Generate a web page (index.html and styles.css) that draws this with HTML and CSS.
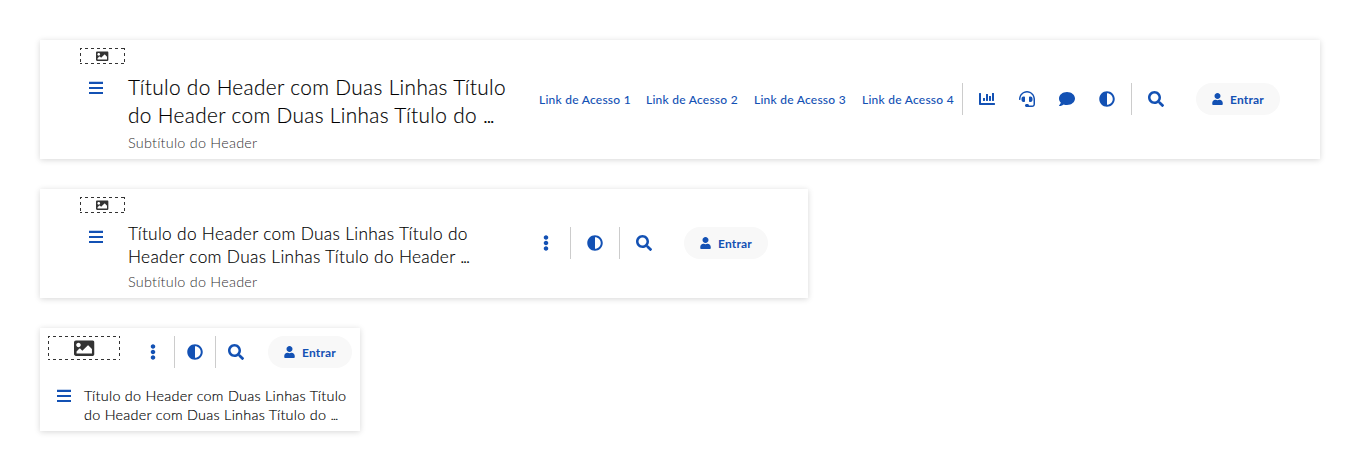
FILE: index.html
```html
<!DOCTYPE html>
<html lang="pt-BR">
<head>
<meta charset="utf-8">
<title>Header</title>
<link rel="stylesheet" href="styles.css">
</head>
<body>
<svg class="sprite" aria-hidden="true">
  <symbol id="bars" viewBox="0 0 14 14"><path d="M0 1.7h14v2.2H0zM0 7h14v2H0zM0 12h14v2H0z"/></symbol>
  <symbol id="image" viewBox="0 0 512 512"><path d="M464 448H48c-26.51 0-48-21.49-48-48V112c0-26.51 21.49-48 48-48h416c26.51 0 48 21.49 48 48v288c0 26.51-21.49 48-48 48zM112 120c-30.928 0-56 25.072-56 56s25.072 56 56 56 56-25.072 56-56-25.072-56-56-56zM64 384h384V272l-87.515-87.515c-4.686-4.686-12.284-4.686-16.971 0L208 320l-55.515-55.515c-4.686-4.686-12.284-4.686-16.971 0L64 336v48z"/></symbol>
  <symbol id="chart" viewBox="0 0 512 512"><path d="M332.8 320h38.4c6.4 0 12.8-6.4 12.8-12.8V172.8c0-6.4-6.4-12.8-12.8-12.8h-38.4c-6.4 0-12.8 6.4-12.8 12.8v134.4c0 6.4 6.4 12.8 12.8 12.8zm96 0h38.4c6.4 0 12.8-6.4 12.8-12.8V76.8c0-6.4-6.4-12.8-12.8-12.8h-38.4c-6.4 0-12.8 6.4-12.8 12.8v230.4c0 6.4 6.4 12.8 12.8 12.8zm-288 0h38.4c6.4 0 12.8-6.4 12.8-12.8v-70.4c0-6.4-6.4-12.8-12.8-12.8h-38.4c-6.4 0-12.8 6.4-12.8 12.8v70.4c0 6.4 6.4 12.8 12.8 12.8zm96 0h38.4c6.4 0 12.8-6.4 12.8-12.8V108.8c0-6.4-6.4-12.8-12.8-12.8h-38.4c-6.4 0-12.8 6.4-12.8 12.8v198.4c0 6.4 6.4 12.8 12.8 12.8zM496 384H64V80c0-8.84-7.16-16-16-16H16C7.16 64 0 71.16 0 80v336c0 17.67 14.33 32 32 32h464c8.84 0 16-7.16 16-16v-32c0-8.84-7.16-16-16-16z"/></symbol>
  <symbol id="headset" viewBox="0 0 512 512"><path d="M192 208c0-17.67-14.33-32-32-32h-16c-35.35 0-64 28.65-64 64v48c0 35.35 28.65 64 64 64h16c17.67 0 32-14.33 32-32V208zm176 144c35.35 0 64-28.65 64-64v-48c0-35.35-28.65-64-64-64h-16c-17.67 0-32 14.33-32 32v112c0 17.67 14.33 32 32 32h16zM256 0C113.18 0 4.58 118.83 0 256v16c0 8.84 7.16 16 16 16h16c8.84 0 16-7.16 16-16v-16c0-114.69 93.31-208 208-208s208 93.31 208 208h-.12c.08 2.43.12 165.72.12 165.72 0 23.35-18.93 42.28-42.28 42.28H320c0-26.51-21.49-48-48-48h-32c-26.51 0-48 21.49-48 48s21.49 48 48 48h181.72c49.86 0 90.28-40.42 90.28-90.28V256C507.42 118.83 398.82 0 256 0z"/></symbol>
  <symbol id="comment" viewBox="0 0 512 512"><path d="M256 32C114.6 32 0 125.1 0 240c0 49.6 21.4 95 57 130.7C44.5 421.1 2.7 466 2.2 466.5c-2.2 2.3-2.8 5.7-1.5 8.7S4.8 480 8 480c66.3 0 116-31.8 140.6-51.4 32.7 12.3 69 19.4 107.4 19.4 141.4 0 256-93.1 256-208S397.4 32 256 32z"/></symbol>
  <symbol id="adjust" viewBox="0 0 512 512"><path d="M8 256c0 136.966 111.033 248 248 248s248-111.034 248-248S392.966 8 256 8 8 119.033 8 256zm248 184V72c101.705 0 184 82.311 184 184 0 101.705-82.311 184-184 184z"/></symbol>
  <symbol id="search" viewBox="0 0 512 512"><path d="M505 442.7L405.3 343c-4.5-4.5-10.6-7-17-7H372c27.6-35.3 44-79.7 44-128C416 93.1 322.9 0 208 0S0 93.1 0 208s93.1 208 208 208c48.3 0 92.7-16.4 128-44v16.3c0 6.4 2.5 12.5 7 17l99.7 99.7c9.4 9.4 24.6 9.4 33.9 0l28.3-28.3c9.4-9.4 9.4-24.6.1-34zM208 336c-70.7 0-128-57.2-128-128 0-70.7 57.2-128 128-128 70.7 0 128 57.2 128 128 0 70.7-57.2 128-128 128z"/></symbol>
  <symbol id="user" viewBox="0 0 448 512"><path d="M224 256c70.7 0 128-57.3 128-128S294.7 0 224 0 96 57.3 96 128s57.3 128 128 128zm89.6 32h-16.7c-22.2 10.2-46.9 16-72.9 16s-50.6-5.8-72.9-16h-16.7C60.2 288 0 348.2 0 422.4V464c0 26.5 21.5 48 48 48h352c26.5 0 48-21.5 48-48v-41.6c0-74.2-60.2-134.4-134.4-134.4z"/></symbol>
  <symbol id="dots" viewBox="0 0 192 512"><path d="M96 184c39.8 0 72 32.2 72 72s-32.2 72-72 72-72-32.2-72-72 32.2-72 72-72zM24 80c0 39.8 32.2 72 72 72s72-32.2 72-72S135.8 8 96 8 24 40.2 24 80zm0 352c0 39.8 32.2 72 72 72s72-32.2 72-72-32.2-72-72-72-72 32.2-72 72z"/></symbol>
</svg>

<header class="header large">
  <div class="brand">
    <div class="logo"><svg><use href="#image"/></svg></div>
    <div class="menu-title">
      <button class="icon menu" aria-label="Menu"><svg><use href="#bars"/></svg></button>
      <div class="titles">
        <h1 class="title"><span class="line">Título do Header com Duas Linhas Título</span><span class="line">do Header com Duas Linhas Título do <span class="more">...</span></span></h1>
        <p class="subtitle">Subtítulo do Header</p>
      </div>
    </div>
  </div>
  <div class="actions">
    <nav class="links"><a>Link de Acesso 1</a><a>Link de Acesso 2</a><a>Link de Acesso 3</a><a>Link de Acesso 4</a></nav>
    <i class="divider"></i>
    <div class="functions">
      <button class="icon" aria-label="Dados"><svg><use href="#chart"/></svg></button>
      <button class="icon" aria-label="Atendimento"><svg><use href="#headset"/></svg></button>
      <button class="icon" aria-label="Mensagens"><svg><use href="#comment"/></svg></button>
      <button class="icon" aria-label="Contraste"><svg><use href="#adjust"/></svg></button>
    </div>
    <i class="divider"></i>
    <button class="icon" aria-label="Buscar"><svg><use href="#search"/></svg></button>
    <button class="login"><svg><use href="#user"/></svg><span>Entrar</span></button>
  </div>
</header>

<header class="header medium">
  <div class="brand">
    <div class="logo"><svg><use href="#image"/></svg></div>
    <div class="menu-title">
      <button class="icon menu" aria-label="Menu"><svg><use href="#bars"/></svg></button>
      <div class="titles">
        <h1 class="title"><span class="line">Título do Header com Duas Linhas Título do</span><span class="line">Header com Duas Linhas Título do Header <span class="more">...</span></span></h1>
        <p class="subtitle">Subtítulo do Header</p>
      </div>
    </div>
  </div>
  <div class="actions">
    <button class="icon" aria-label="Mais"><svg><use href="#dots"/></svg></button>
    <i class="divider"></i>
    <button class="icon" aria-label="Contraste"><svg><use href="#adjust"/></svg></button>
    <i class="divider"></i>
    <button class="icon" aria-label="Buscar"><svg><use href="#search"/></svg></button>
    <button class="login"><svg><use href="#user"/></svg><span>Entrar</span></button>
  </div>
</header>

<header class="header small">
  <div class="top">
    <div class="logo"><svg><use href="#image"/></svg></div>
    <div class="actions">
      <button class="icon" aria-label="Mais"><svg><use href="#dots"/></svg></button>
      <i class="divider"></i>
      <button class="icon" aria-label="Contraste"><svg><use href="#adjust"/></svg></button>
      <i class="divider"></i>
      <button class="icon" aria-label="Buscar"><svg><use href="#search"/></svg></button>
      <button class="login"><svg><use href="#user"/></svg><span>Entrar</span></button>
    </div>
  </div>
  <div class="menu-title">
    <button class="icon menu" aria-label="Menu"><svg><use href="#bars"/></svg></button>
    <h1 class="title"><span class="line">Título do Header com Duas Linhas Título</span><span class="line">do Header com Duas Linhas Título do <span class="more">...</span></span></h1>
  </div>
</header>
</body>
</html>
```
FILE: styles.css
```css
* { box-sizing: border-box; }

body {
  margin: 0;
  padding: 40px;
  display: flex;
  flex-direction: column;
  align-items: flex-start;
  gap: 30px;
  background: #fff;
  color: #000;
  font-family: Lato, sans-serif;
}

.sprite { display: none; }

button {
  border: 0;
  padding: 0;
  background: none;
  font: inherit;
  color: #1351b4;
}

.header {
  display: flex;
  justify-content: space-between;
  background: #fff;
  box-shadow: 0 1px 6px rgba(0, 0, 0, .16);
}

.large { width: 1280px; height: 119px; padding: 8px 40px; }
.medium { width: 768px; height: 109px; padding: 8px 40px; }
.small { width: 320px; height: 103px; padding: 8px; flex-direction: column; justify-content: flex-start; gap: 12px; }

/* Dashed frame: 3px dashes with 3px gaps on each side */
.logo {
  --dash-x: linear-gradient(90deg, #333 3px, transparent 3px);
  --dash-y: linear-gradient(180deg, #333 3px, transparent 3px);
  width: 45px;
  height: 16px;
  color: #333;
  display: flex;
  align-items: center;
  justify-content: center;
  background-image: var(--dash-x), var(--dash-x), var(--dash-y), var(--dash-y);
  background-size: 6px 1px, 6px 1px, 1px 6px, 1px 6px;
  background-position: -1px 0, -1px 100%, 0 -1px, 100% -1px;
  background-repeat: repeat-x, repeat-x, repeat-y, repeat-y;
}
.logo svg { width: 12.6px; height: 12.6px; margin-top: 1px; fill: currentColor; flex: none; }
.small .logo { width: 72px; height: 24px; }
.small .logo svg { width: 20.5px; height: 20.5px; margin-left: 1px; }

.menu-title { display: flex; align-items: flex-start; margin-top: 8px; gap: 16px; }
.small .menu-title { margin-top: 0; gap: 4px; }

.icon {
  width: 32px;
  height: 32px;
  display: flex;
  align-items: center;
  justify-content: center;
  flex: none;
}
.icon svg { width: 16px; height: 16px; fill: currentColor; }
.menu svg { width: 14px; height: 14px; margin-top: -2px; }

.title { margin: 0; font-weight: 300; -webkit-text-stroke: .15px #000; }
.line { display: block; white-space: nowrap; }
.large .title { padding-top: 1px; font-size: 20.8px; line-height: 28px; letter-spacing: .36px; }
.medium .title { padding-top: 1px; font-size: 17.3px; line-height: 23px; letter-spacing: .32px; }
.small .title { padding-top: 6px; font-size: 14.4px; line-height: 19px; letter-spacing: .27px; }
.title .more { letter-spacing: -.07em; }
.subtitle { margin: 4px 0 0; font-size: 14.4px; line-height: 20px; color: #333; font-weight: 300; letter-spacing: .24px; }

.actions { display: flex; align-items: center; height: 32px; }
.large .actions { margin-top: 35px; }
.medium .actions { margin-top: 30px; }
.small .top { display: flex; justify-content: space-between; align-items: flex-start; }
.small .actions .icon:first-child svg { margin-right: 2px; }

.links { display: flex; gap: 16px; padding-right: 8px; font-size: 12px; font-weight: 500; letter-spacing: .24px; color: #1351b4; }
.links a { width: 92px; white-space: nowrap; }
.links a:first-child { width: 91px; }

.divider { width: 1px; height: 32px; background: #ccc; margin: 0 8px; }
.links + .divider { margin-left: 0; }
.functions { display: flex; gap: 8px; }
.small .divider { margin: 0 4px; }

.login {
  width: 84px;
  height: 32px;
  margin-left: 24px;
  border-radius: 16px;
  background: #f8f8f8;
  display: flex;
  align-items: center;
  justify-content: center;
  gap: 7px;
  font-size: 12px;
  font-weight: 700;
  letter-spacing: .2px;
}
.small .login { margin-left: 16px; }
.login svg { width: 11px; height: 12px; fill: currentColor; }
```
